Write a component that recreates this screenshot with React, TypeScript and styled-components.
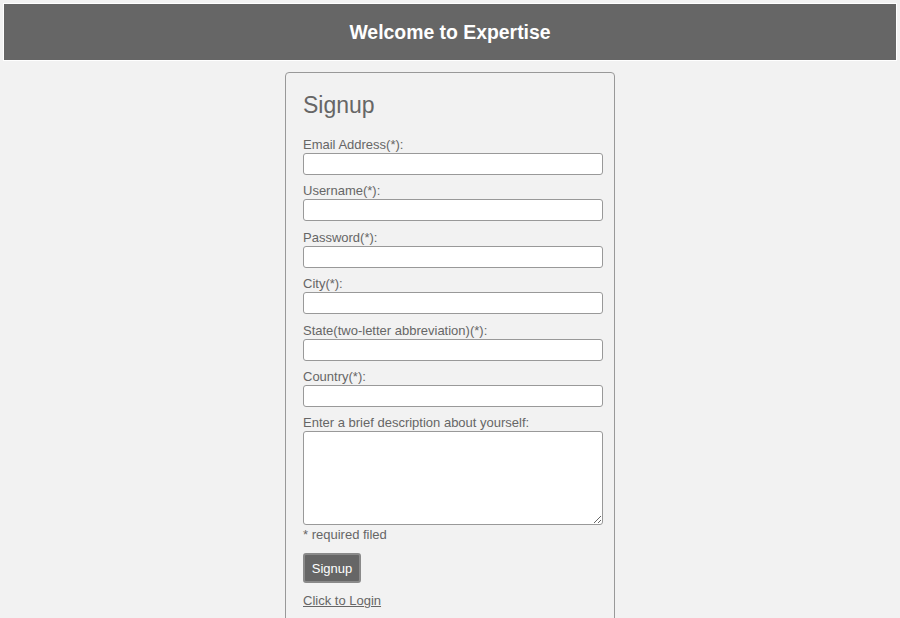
import React from "react";
import styled, { createGlobalStyle } from "styled-components";

const Global = createGlobalStyle`
  html, body { margin: 0; padding: 0; background: #f2f2f2; }
  body { font-family: "Liberation Sans", Arial, sans-serif; color: #666; }
  * { box-sizing: border-box; }
`;

const Page = styled.div`
  padding: 3px;
  display: flex;
  flex-direction: column;
  align-items: center;
`;

const Header = styled.header`
  align-self: stretch;
  height: 58px;
  background: #666;
  border: 1px solid #fff;
  display: flex;
  align-items: center;
  justify-content: center;
`;

const Title = styled.h1`
  margin: 0;
  font-size: 19.4px;
  font-weight: bold;
  color: #fff;
`;

const Card = styled.form`
  margin-top: 11px;
  width: 330px;
  border: 1px solid #999;
  border-radius: 4px;
  padding: 18px 17px 20px 17px;
  display: flex;
  flex-direction: column;
`;

const Heading = styled.h2`
  margin: 0 0 17px 0;
  font-size: 23px;
  font-weight: normal;
  color: #666;
  line-height: 28px;
`;

const Field = styled.label<{ $last?: boolean }>`
  display: flex;
  flex-direction: column;
  font-size: 13px;
  line-height: 17px;
  color: #666;
  margin-bottom: ${(p) => (p.$last ? "0" : "7.4px")};
`;

const Input = styled.input`
  width: 300px;
  height: 22px;
  border: 1px solid #999;
  border-radius: 3px;
  background: #fff;
  padding: 1px 2px;
  font-family: inherit;
`;

const TextArea = styled.textarea`
  width: 300px;
  height: 94px;
  border: 1px solid #999;
  border-radius: 3px;
  background: #fff;
  padding: 2px;
  font-family: inherit;
  resize: both;
`;

const Note = styled.div`
  font-size: 13px;
  line-height: 17px;
  margin-top: 1px;
  color: #666;
`;

const Button = styled.button`
  margin-top: 10px;
  align-self: flex-start;
  width: 58px;
  height: 30px;
  background: #666;
  color: #fff;
  border: 2px solid #8a8a8a;
  border-radius: 3px;
  font-family: "Liberation Sans", Arial, sans-serif;
  font-size: 13px;
  padding: 0;
`;

const LoginLink = styled.a`
  margin-top: 9px;
  font-size: 13px;
  line-height: 17px;
  color: #666;
  text-decoration: underline;
  align-self: flex-start;
`;

const fields = [
  "Email Address(*):",
  "Username(*):",
  "Password(*):",
  "City(*):",
  "State(two-letter abbreviation)(*):",
  "Country(*):",
];

export default function App() {
  return (
    <>
      <Global />
      <Page>
        <Header>
          <Title>Welcome to Expertise</Title>
        </Header>
        <Card onSubmit={(e) => e.preventDefault()}>
          <Heading>Signup</Heading>
          {fields.map((f) => (
            <Field key={f}>
              {f}
              <Input type={f.startsWith("Password") ? "password" : "text"} />
            </Field>
          ))}
          <Field $last>
            Enter a brief description about yourself:
            <TextArea />
          </Field>
          <Note>* required filed</Note>
          <Button type="submit">Signup</Button>
          <LoginLink href="#">Click to Login</LoginLink>
        </Card>
      </Page>
    </>
  );
}
